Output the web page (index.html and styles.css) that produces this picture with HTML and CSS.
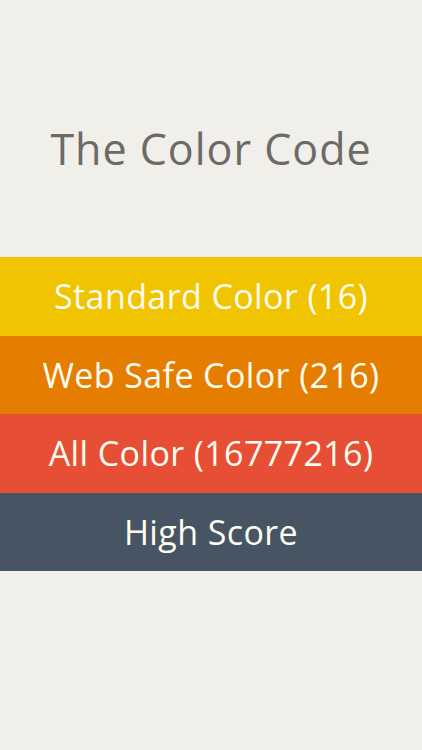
FILE: index.html
```html
<!DOCTYPE html>
<html lang="en">
<head>
  <meta charset="UTF-8">
  <meta name="viewport" content="width=device-width, initial-scale=1.0">
  <title>The Color Code</title>
  <link rel="stylesheet" href="styles.css">
</head>
<body>
  <div class="screen">
    <h1 class="title">The Color Code</h1>
    <div class="menu">
      <div class="menu-item standard">Standard Color (16)</div>
      <div class="menu-item websafe">Web Safe Color (216)</div>
      <div class="menu-item all">All Color (16777216)</div>
      <div class="menu-item score">High Score</div>
    </div>
  </div>
</body>
</html>
```

FILE: styles.css
```css
html, body{
  margin: 0;
  padding: 0;
  background: #f1efe9;
}
.screen{
  height: 750px;
  font-family: "Open Sans", "Noto Sans", sans-serif;
}
.title{
  margin: 0;
  height: 257px;
  display: flex;
  align-items: center;
  justify-content: center;
  padding-top: 40px;
  box-sizing: border-box;
  font-size: 43px;
  font-weight: 400;
  letter-spacing: 1px;
  color: #6b6a67;
}
.menu-item{
  height: 78.5px;
  display: flex;
  align-items: center;
  justify-content: center;
  font-size: 34px;
  letter-spacing: 0.4px;
  color: #fffcf0;
}
.menu-item.standard{ background: #f0c400; }
.menu-item.websafe{ background: #e57e00; }
.menu-item.all{ background: #e64f35; }
.menu-item.score{ background: #465463; }
```
